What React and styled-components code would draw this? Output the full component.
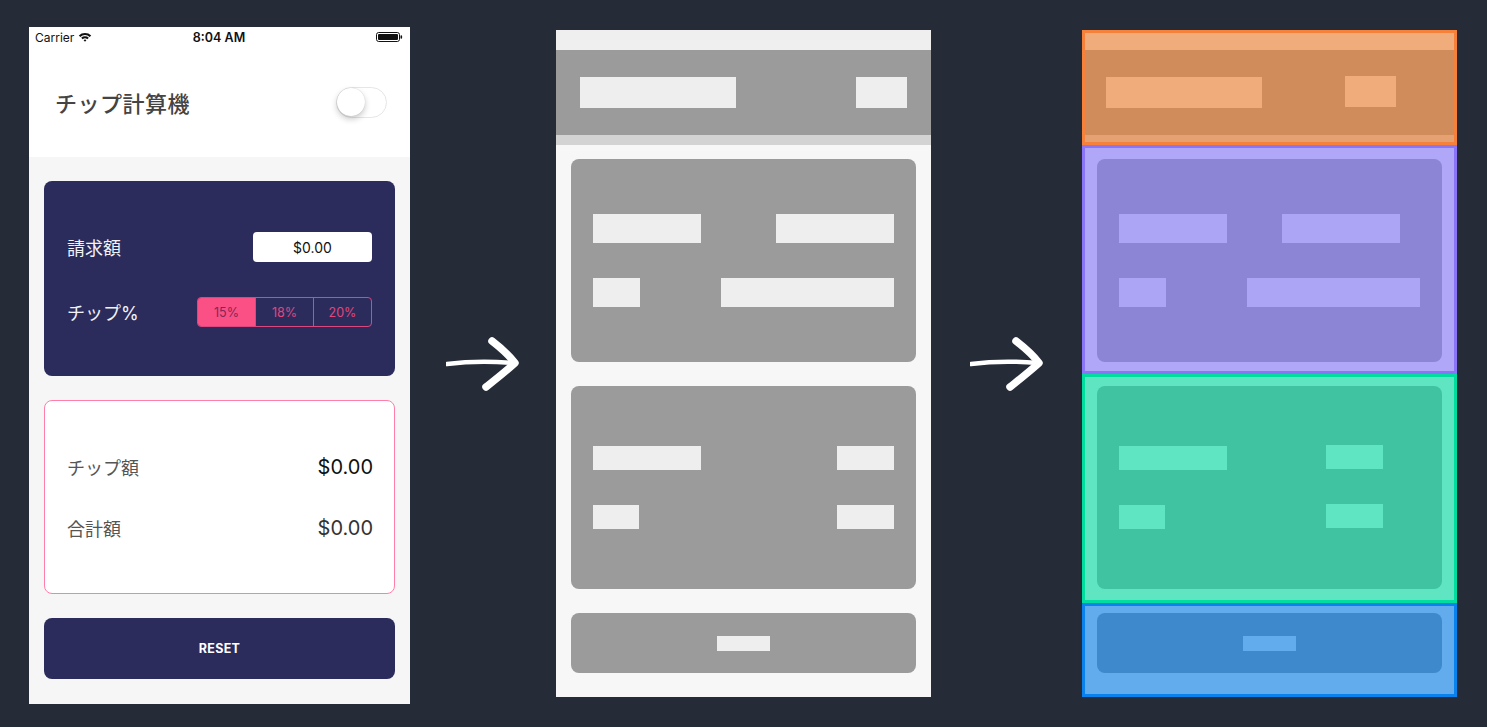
import React from 'react';
import styled, {createGlobalStyle} from 'styled-components';

const GlobalStyle = createGlobalStyle`
  html, body {
    margin: 0;
    padding: 0;
    background: #252b37;
  }
  body {
    font-family: Inter, "Noto Sans CJK JP", sans-serif;
  }
`;

const Page = styled.div`
  display: flex;
  align-items: center;
  height: 727px;
  padding-left: 29px;
  box-sizing: border-box;
`;

const ArrowSlot = styled.div`
  flex: none;
  width: ${p => p.$w}px;
  display: flex;
  justify-content: center;
`;

/* ---------- phone ---------- */

const Phone = styled.div`
  align-self: flex-start;
  margin-top: 27px;
  width: 381px;
  height: 677px;
  flex: none;
  background: #f6f6f6;
  display: flex;
  flex-direction: column;
`;

const StatusBar = styled.div`
  height: 20px;
  background: #fff;
  display: flex;
  align-items: center;
  justify-content: space-between;
  padding: 0 7px 0 6px;
  font-size: 12px;
  color: #111;
`;

const StatusSide = styled.div`
  width: 90px;
  display: flex;
  align-items: center;
  gap: 4px;
  justify-content: ${p => (p.$right ? 'flex-end' : 'flex-start')};
`;

const Time = styled.span`
  font-weight: 600;
  font-size: 12.5px;
`;

const Header = styled.div`
  height: 110px;
  background: #fff;
  display: flex;
  align-items: center;
  justify-content: space-between;
  padding: 0 23px 0 26px;
`;

const Title = styled.h1`
  margin: 0;
  font-size: 22px;
  font-weight: 500;
  color: #444;
  letter-spacing: 0.5px;
`;

const Switch = styled.div`
  width: 51px;
  height: 31px;
  box-sizing: border-box;
  border-radius: 16px;
  border: 1.5px solid #e6e6e6;
  background: #fff;
  display: flex;
  align-items: center;
`;

const Knob = styled.div`
  width: 28px;
  height: 28px;
  border-radius: 50%;
  background: #fff;
  box-shadow: 0 3px 6px rgba(0, 0, 0, 0.22), 0 0 1px rgba(0, 0, 0, 0.2);
`;

const Content = styled.div`
  flex: 1;
  padding: 24px 15px;
  display: flex;
  flex-direction: column;
  gap: 24px;
`;

const InputCard = styled.div`
  height: 195px;
  box-sizing: border-box;
  border-radius: 8px;
  background: #2b2b5c;
  padding: 51px 22px 0 23px;
  display: flex;
  flex-direction: column;
  gap: 35px;
`;

const ResultCard = styled.div`
  height: 194px;
  box-sizing: border-box;
  border-radius: 8px;
  background: #fff;
  border: 1px solid #ff7eaa;
  padding: 51px 21px 0 22px;
  display: flex;
  flex-direction: column;
  gap: 31px;
`;

const Row = styled.div`
  height: 30px;
  display: flex;
  align-items: center;
  justify-content: space-between;
`;

const Label = styled.span`
  font-size: 18px;
  color: ${p => p.$color};
`;

const Value = styled.span`
  font-size: 20px;
  color: ${p => p.$color};
`;

const AmountInput = styled.div`
  width: 119px;
  height: 30px;
  margin-right: 1px;
  border-radius: 4px;
  background: #fff;
  display: flex;
  align-items: center;
  justify-content: center;
  font-size: 14px;
  color: #111;
`;

const Segments = styled.div`
  display: flex;
  width: 175px;
  height: 30px;
  margin-right: 1px;
  box-sizing: border-box;
  border: 1px solid #d8487f;
  border-radius: 4px;
  overflow: hidden;
`;

const Segment = styled.div`
  flex: 1;
  display: flex;
  align-items: center;
  justify-content: center;
  font-size: 12.5px;
  background: ${p => (p.$active ? '#fb5086' : 'transparent')};
  color: ${p => (p.$active ? '#7e2855' : '#e2467d')};
  & + & {
    border-left: 1px solid #d8487f;
  }
`;

const ResetButton = styled.div`
  height: 61px;
  border-radius: 8px;
  background: #2b2b5c;
  color: #fff;
  font-size: 12.5px;
  font-weight: 700;
  letter-spacing: 0.3px;
  display: flex;
  align-items: center;
  justify-content: center;
`;

/* ---------- wireframes ---------- */

const Frame = styled.div`
  align-self: flex-start;
  margin-top: 30px;
  width: 375px;
  height: 667px;
  flex: none;
  background: ${p => p.$bg || 'transparent'};
  display: flex;
  flex-direction: column;
`;

const Strip = styled.div`
  height: ${p => p.$h}px;
  background: ${p => p.$bg};
  flex: none;
`;

const WireHeader = styled.div`
  height: 85px;
  flex: none;
  box-sizing: border-box;
  background: ${p => p.$bg};
  display: flex;
  justify-content: space-between;
  align-items: flex-start;
  padding: 27px ${p => p.$pr}px 0 ${p => p.$pl}px;
`;

const Block = styled.div`
  width: ${p => p.$w}px;
  height: ${p => p.$h}px;
  background: ${p => p.$bg};
  margin-right: ${p => p.$mr || 0}px;
  margin-top: ${p => p.$mt || 0}px;
  flex: none;
`;

const WireBody = styled.div`
  padding: 14px 15px 24px;
  display: flex;
  flex-direction: column;
  gap: 24px;
`;

const WireCard = styled.div`
  height: ${p => p.$h}px;
  box-sizing: border-box;
  border-radius: 8px;
  background: ${p => p.$bg};
  padding-top: ${p => p.$pt}px;
  display: flex;
  flex-direction: column;
  align-items: ${p => (p.$center ? 'center' : 'stretch')};
  gap: 35px;
  flex: none;
`;

const WireRow = styled.div`
  display: flex;
  justify-content: space-between;
  align-items: flex-start;
  padding: 0 22px;
`;

const Section = styled.div`
  height: ${p => p.$h}px;
  box-sizing: border-box;
  border: 3px solid ${p => p.$border};
  background: ${p => p.$fill};
  padding: ${p => p.$pad || '0'};
  display: flex;
  flex-direction: column;
  flex: none;
`;

/* ---------- drawings ---------- */

const Arrow = () => (
  <svg width="74" height="56" viewBox="0 0 74 56">
    <path d="M1 28 C20 25.5 45 25 68 27" fill="none" stroke="#fff" strokeWidth="4.5" strokeLinecap="round" />
    <path d="M46 5 C55 12 63 19 69 27 C59 36 50 43 40 51" fill="none" stroke="#fff" strokeWidth="7.5" strokeLinecap="round" strokeLinejoin="round" />
  </svg>
);

const Wifi = () => (
  <svg width="14" height="10" viewBox="0 0 14 10">
    <path d="M0.8 3.4 A9 9 0 0 1 13.2 3.4 L11.7 4.9 A7 7 0 0 0 2.3 4.9 Z" fill="#111" />
    <path d="M3.2 5.8 A5.6 5.6 0 0 1 10.8 5.8 L9.3 7.3 A3.5 3.5 0 0 0 4.7 7.3 Z" fill="#111" />
    <path d="M5.6 8.2 A2 2 0 0 1 8.4 8.2 L7 9.7 Z" fill="#111" />
  </svg>
);

const Battery = () => (
  <svg width="27" height="10" viewBox="0 0 27 10">
    <rect x="0.5" y="0.5" width="23" height="9" rx="2.2" fill="none" stroke="#111" strokeWidth="1" />
    <rect x="2" y="2" width="20" height="6" rx="1" fill="#111" />
    <rect x="24.5" y="3.3" width="1.6" height="3.4" rx="0.8" fill="#111" />
  </svg>
);

/* ---------- wire content ---------- */

const FormCard = ({bg, block, row1Mr = 0}) => (
  <WireCard $h={203} $pt={55} $bg={bg}>
    <WireRow>
      <Block $w={108} $h={29} $bg={block} />
      <Block $w={118} $h={29} $bg={block} $mr={row1Mr} />
    </WireRow>
    <WireRow>
      <Block $w={47} $h={29} $bg={block} />
      <Block $w={173} $h={29} $bg={block} />
    </WireRow>
  </WireCard>
);

const ResultWire = ({bg, block, mr = 0, rightMt = 0}) => (
  <WireCard $h={203} $pt={60} $bg={bg}>
    <WireRow>
      <Block $w={108} $h={24} $bg={block} />
      <Block $w={57} $h={24} $bg={block} $mr={mr} $mt={rightMt} />
    </WireRow>
    <WireRow>
      <Block $w={46} $h={24} $bg={block} />
      <Block $w={57} $h={24} $bg={block} $mr={mr} $mt={rightMt} />
    </WireRow>
  </WireCard>
);

const ButtonWire = ({bg, block}) => (
  <WireCard $h={60} $pt={23} $bg={bg} $center>
    <Block $w={53} $h={15} $bg={block} />
  </WireCard>
);

export default function App() {
  return (
    <>
      <GlobalStyle />
      <Page>
        <Phone>
          <StatusBar>
            <StatusSide>
              <span>Carrier</span>
              <Wifi />
            </StatusSide>
            <Time>8:04 AM</Time>
            <StatusSide $right>
              <Battery />
            </StatusSide>
          </StatusBar>
          <Header>
            <Title>チップ計算機</Title>
            <Switch>
              <Knob />
            </Switch>
          </Header>
          <Content>
            <InputCard>
              <Row>
                <Label $color="#f2f2f6">請求額</Label>
                <AmountInput>$0.00</AmountInput>
              </Row>
              <Row>
                <Label $color="#f2f2f6">チップ%</Label>
                <Segments>
                  <Segment $active>15%</Segment>
                  <Segment>18%</Segment>
                  <Segment>20%</Segment>
                </Segments>
              </Row>
            </InputCard>
            <ResultCard>
              <Row>
                <Label $color="#555">チップ額</Label>
                <Value $color="#111">$0.00</Value>
              </Row>
              <Row>
                <Label $color="#555">合計額</Label>
                <Value $color="#333">$0.00</Value>
              </Row>
            </ResultCard>
            <ResetButton>RESET</ResetButton>
          </Content>
        </Phone>

        <ArrowSlot $w={146}>
          <Arrow />
        </ArrowSlot>

        <Frame $bg="#f7f7f7">
          <Strip $h={20} $bg="#efefef" />
          <WireHeader $bg="#9b9b9b" $pl={24} $pr={24}>
            <Block $w={156} $h={31} $bg="#eeeeee" />
            <Block $w={51} $h={31} $bg="#eeeeee" />
          </WireHeader>
          <Strip $h={10} $bg="#d3d3d3" />
          <WireBody>
            <FormCard bg="#9b9b9b" block="#eeeeee" />
            <ResultWire bg="#9b9b9b" block="#eeeeee" />
            <ButtonWire bg="#9b9b9b" block="#eeeeee" />
          </WireBody>
        </Frame>

        <ArrowSlot $w={151}>
          <Arrow />
        </ArrowSlot>

        <Frame>
          <Section $h={115} $border="#f5813a" $fill="#f0ad7b">
            <Strip $h={17} $bg="#f0ad7b" />
            <WireHeader $bg="#d08c5b" $pl={21} $pr={58}>
              <Block $w={156} $h={31} $bg="#f0ad7b" />
              <Block $w={51} $h={31} $bg="#f0ad7b" $mt={-1} />
            </WireHeader>
            <Strip $h={7} $bg="#e5a171" />
          </Section>
          <Section $h={229} $border="#8a74f7" $fill="#b0a7f8" $pad="11px 12px 0">
            <FormCard bg="#8c84d4" block="#aca4f5" row1Mr={20} />
          </Section>
          <Section $h={229} $border="#00dd9e" $fill="#60e5c3" $pad="9px 12px 0">
            <ResultWire bg="#40c3a0" block="#60e5c3" mr={37} rightMt={-1} />
          </Section>
          <Section $h={94} $border="#0a82ee" $fill="#62acee" $pad="7px 12px 0">
            <ButtonWire bg="#3e89cc" block="#62acee" />
          </Section>
        </Frame>
      </Page>
    </>
  );
}
